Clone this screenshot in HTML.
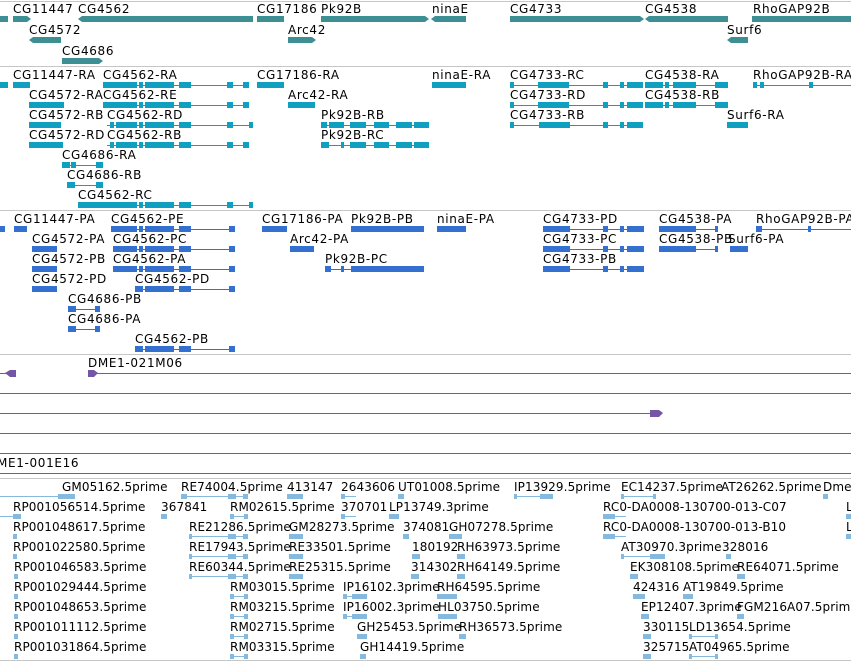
<!DOCTYPE html>
<html><head><meta charset="utf-8"><style>
html,body{margin:0;padding:0;background:#fff;width:851px;height:662px;overflow:hidden}
svg{display:block}
text{font-family:"DejaVu Sans","Liberation Sans",sans-serif;font-size:12px;fill:#000;letter-spacing:0.65px}
.e text{font-size:12px;letter-spacing:0.1px}
</style></head><body>
<svg width="851" height="662" viewBox="0 0 851 662" xmlns="http://www.w3.org/2000/svg">
<g fill="#c6c6c6">
<rect x="0" y="1" width="851" height="1"/><rect x="0" y="66" width="851" height="1"/>
<rect x="0" y="210" width="851" height="1"/><rect x="0" y="354" width="851" height="1"/>
<rect x="0" y="478" width="851" height="1"/><rect x="0" y="660" width="851" height="1"/>
</g>
<g fill="#3d8f94">
<rect x="0" y="16" width="8" height="6"/>
<polygon points="13,16 27,16 31,19 27,22 13,22"/>
<polygon points="82,16 253,16 253,22 82,22 78,19"/>
<rect x="257" y="16" width="27" height="6"/>
<polygon points="321,16 425,16 429,19 425,22 321,22"/>
<polygon points="435,16 466,16 466,22 435,22 431,19"/>
<polygon points="510,16 640,16 644,19 640,22 510,22"/>
<polygon points="649,16 728,16 728,22 649,22 645,19"/>
<rect x="752" y="16" width="99" height="6"/>
<polygon points="29,40 33,37 61,37 61,43 33,43"/>
<polygon points="288,37 312,37 316,40 312,43 288,43"/>
<polygon points="731,37 748,37 748,43 731,43 727,40"/>
<polygon points="62,58 99,58 103,61 99,64 62,64"/>
</g>
<g>
<text x="13" y="13">CG11447</text><text x="78" y="13">CG4562</text><text x="257" y="13">CG17186</text>
<text x="321" y="13">Pk92B</text><text x="432" y="13">ninaE</text><text x="510" y="13">CG4733</text>
<text x="645" y="13">CG4538</text><text x="753" y="13">RhoGAP92B</text>
<text x="29" y="34">CG4572</text><text x="288" y="34">Arc42</text><text x="727" y="34">Surf6</text>
<text x="62" y="55">CG4686</text>
</g>
<g fill="#0e9fc1">
<rect x="0" y="82" width="8" height="6"/><rect x="13" y="82" width="17" height="6"/>
<rect x="103" y="82" width="34" height="6"/><rect x="139" y="82" width="4" height="6"/><rect x="145" y="82" width="29" height="6"/><rect x="103" y="85" width="146" height="1"/><rect x="179" y="82" width="12" height="6"/><rect x="227" y="82" width="6" height="6"/><rect x="243" y="82" width="6" height="6"/>
<rect x="257" y="82" width="27" height="6"/>
<rect x="432" y="82" width="34" height="6"/>
<rect x="510" y="85" width="133" height="1"/><rect x="510" y="82" width="4" height="6"/><rect x="538" y="82" width="26" height="6"/><rect x="564" y="82" width="5" height="6"/><rect x="603" y="82" width="5" height="6"/><rect x="620" y="82" width="4" height="6"/><rect x="627" y="82" width="16" height="6"/>
<rect x="645" y="82" width="18" height="6"/><rect x="665" y="82" width="4" height="6"/><rect x="673" y="82" width="23" height="6"/><rect x="645" y="85" width="83" height="1"/><rect x="715" y="82" width="13" height="6"/>
<rect x="753" y="85" width="98" height="1"/><rect x="753" y="82" width="4" height="6"/><rect x="760" y="82" width="4" height="6"/><rect x="809" y="82" width="4" height="6"/>
<rect x="29" y="102" width="35" height="6"/>
<rect x="103" y="102" width="34" height="6"/><rect x="139" y="102" width="4" height="6"/><rect x="145" y="102" width="29" height="6"/><rect x="103" y="105" width="146" height="1"/><rect x="179" y="102" width="12" height="6"/><rect x="227" y="102" width="6" height="6"/><rect x="243" y="102" width="6" height="6"/>
<rect x="288" y="102" width="27" height="6"/>
<rect x="510" y="105" width="133" height="1"/><rect x="510" y="102" width="4" height="6"/><rect x="538" y="102" width="26" height="6"/><rect x="564" y="102" width="5" height="6"/><rect x="603" y="102" width="5" height="6"/><rect x="620" y="102" width="4" height="6"/><rect x="627" y="102" width="16" height="6"/>
<rect x="645" y="102" width="18" height="6"/><rect x="665" y="102" width="4" height="6"/><rect x="673" y="102" width="23" height="6"/><rect x="645" y="105" width="83" height="1"/><rect x="715" y="102" width="13" height="6"/>
<rect x="29" y="122" width="32" height="6"/>
<rect x="107" y="125" width="146" height="1"/><rect x="110" y="122" width="4" height="6"/><rect x="116" y="122" width="21" height="6"/><rect x="139" y="122" width="4" height="6"/><rect x="145" y="122" width="29" height="6"/><rect x="179" y="122" width="12" height="6"/><rect x="227" y="122" width="6" height="6"/><rect x="249" y="122" width="4" height="6"/>
<rect x="321" y="125" width="108" height="1"/><rect x="321" y="122" width="6" height="6"/><rect x="329" y="122" width="15" height="6"/><rect x="350" y="122" width="16" height="6"/><rect x="374" y="122" width="15" height="6"/><rect x="396" y="122" width="16" height="6"/><rect x="414" y="122" width="15" height="6"/>
<rect x="510" y="125" width="133" height="1"/><rect x="510" y="122" width="4" height="6"/><rect x="539" y="122" width="26" height="6"/><rect x="565" y="122" width="5" height="6"/><rect x="603" y="122" width="5" height="6"/><rect x="620" y="122" width="4" height="6"/><rect x="627" y="122" width="16" height="6"/>
<rect x="727" y="122" width="21" height="6"/>
<rect x="29" y="142" width="34" height="6"/>
<rect x="107" y="145" width="142" height="1"/><rect x="110" y="142" width="4" height="6"/><rect x="116" y="142" width="21" height="6"/><rect x="139" y="142" width="4" height="6"/><rect x="145" y="142" width="29" height="6"/><rect x="179" y="142" width="12" height="6"/><rect x="227" y="142" width="6" height="6"/><rect x="243" y="142" width="6" height="6"/>
<rect x="321" y="145" width="108" height="1"/><rect x="321" y="142" width="8" height="6"/><rect x="341" y="142" width="3" height="6"/><rect x="350" y="142" width="16" height="6"/><rect x="374" y="142" width="15" height="6"/><rect x="396" y="142" width="16" height="6"/><rect x="414" y="142" width="15" height="6"/>
<rect x="62" y="165" width="41" height="1"/><rect x="62" y="162" width="8" height="6"/><rect x="71" y="162" width="5" height="6"/><rect x="96" y="162" width="7" height="6"/>
<rect x="67" y="185" width="36" height="1"/><rect x="67" y="182" width="8" height="6"/><rect x="96" y="182" width="7" height="6"/>
<rect x="78" y="202" width="59" height="6"/><rect x="139" y="202" width="4" height="6"/><rect x="145" y="202" width="29" height="6"/><rect x="78" y="205" width="175" height="1"/><rect x="179" y="202" width="12" height="6"/><rect x="227" y="202" width="6" height="6"/><rect x="249" y="202" width="4" height="6"/>
</g>
<g>
<text x="13" y="79">CG11447-RA</text><text x="103" y="79">CG4562-RA</text><text x="257" y="79">CG17186-RA</text><text x="432" y="79">ninaE-RA</text><text x="510" y="79">CG4733-RC</text><text x="645" y="79">CG4538-RA</text><text x="753" y="79">RhoGAP92B-RA</text>
<text x="29" y="99">CG4572-RA</text><text x="103" y="99">CG4562-RE</text><text x="288" y="99">Arc42-RA</text><text x="510" y="99">CG4733-RD</text><text x="645" y="99">CG4538-RB</text>
<text x="29" y="119">CG4572-RB</text><text x="107" y="119">CG4562-RD</text><text x="321" y="119">Pk92B-RB</text><text x="510" y="119">CG4733-RB</text><text x="727" y="119">Surf6-RA</text>
<text x="29" y="139">CG4572-RD</text><text x="107" y="139">CG4562-RB</text><text x="321" y="139">Pk92B-RC</text>
<text x="62" y="159">CG4686-RA</text><text x="67" y="179">CG4686-RB</text><text x="78" y="199">CG4562-RC</text>
</g>
<g fill="#3370cf">
<rect x="0" y="226" width="5" height="6"/><rect x="14" y="226" width="13" height="6"/>
<rect x="111" y="226" width="26" height="6"/><rect x="139" y="226" width="4" height="6"/><rect x="145" y="226" width="29" height="6"/><rect x="111" y="229" width="124" height="1"/><rect x="179" y="226" width="12" height="6"/><rect x="229" y="226" width="6" height="6"/>
<rect x="262" y="226" width="25" height="6"/>
<rect x="351" y="226" width="73" height="6"/>
<rect x="437" y="226" width="29" height="6"/>
<rect x="543" y="226" width="27" height="6"/><rect x="543" y="229" width="101" height="1"/><rect x="603" y="226" width="5" height="6"/><rect x="620" y="226" width="4" height="6"/><rect x="627" y="226" width="17" height="6"/>
<rect x="659" y="226" width="37" height="6"/><rect x="659" y="229" width="59" height="1"/><rect x="715" y="226" width="3" height="6"/>
<rect x="756" y="229" width="95" height="1"/><rect x="756" y="226" width="6" height="6"/><rect x="808" y="226" width="3" height="6"/>
<rect x="32" y="246" width="25" height="6"/>
<rect x="113" y="246" width="24" height="6"/><rect x="139" y="246" width="4" height="6"/><rect x="145" y="246" width="29" height="6"/><rect x="113" y="249" width="122" height="1"/><rect x="179" y="246" width="12" height="6"/><rect x="229" y="246" width="6" height="6"/>
<rect x="290" y="246" width="24" height="6"/>
<rect x="543" y="246" width="27" height="6"/><rect x="543" y="249" width="101" height="1"/><rect x="603" y="246" width="5" height="6"/><rect x="620" y="246" width="4" height="6"/><rect x="627" y="246" width="17" height="6"/>
<rect x="659" y="246" width="37" height="6"/><rect x="659" y="249" width="59" height="1"/><rect x="715" y="246" width="3" height="6"/>
<rect x="730" y="246" width="18" height="6"/>
<rect x="32" y="266" width="25" height="6"/>
<rect x="113" y="266" width="24" height="6"/><rect x="139" y="266" width="4" height="6"/><rect x="145" y="266" width="29" height="6"/><rect x="113" y="269" width="122" height="1"/><rect x="179" y="266" width="12" height="6"/><rect x="229" y="266" width="6" height="6"/>
<rect x="325" y="269" width="98" height="1"/><rect x="325" y="266" width="6" height="6"/><rect x="341" y="266" width="3" height="6"/><rect x="351" y="266" width="73" height="6"/>
<rect x="543" y="266" width="27" height="6"/><rect x="543" y="269" width="101" height="1"/><rect x="603" y="266" width="5" height="6"/><rect x="620" y="266" width="4" height="6"/><rect x="627" y="266" width="17" height="6"/>
<rect x="32" y="286" width="25" height="6"/>
<rect x="135" y="286" width="8" height="6"/><rect x="145" y="286" width="29" height="6"/><rect x="135" y="289" width="100" height="1"/><rect x="179" y="286" width="12" height="6"/><rect x="229" y="286" width="6" height="6"/>
<rect x="68" y="309" width="32" height="1"/><rect x="68" y="306" width="8" height="6"/><rect x="95" y="306" width="5" height="6"/>
<rect x="68" y="329" width="32" height="1"/><rect x="68" y="326" width="8" height="6"/><rect x="95" y="326" width="5" height="6"/>
<rect x="135" y="346" width="8" height="6"/><rect x="145" y="346" width="29" height="6"/><rect x="135" y="349" width="100" height="1"/><rect x="179" y="346" width="12" height="6"/><rect x="229" y="346" width="6" height="6"/>
</g>
<g>
<text x="14" y="223">CG11447-PA</text><text x="111" y="223">CG4562-PE</text><text x="262" y="223">CG17186-PA</text><text x="351" y="223">Pk92B-PB</text><text x="437" y="223">ninaE-PA</text><text x="543" y="223">CG4733-PD</text><text x="659" y="223">CG4538-PA</text><text x="756" y="223">RhoGAP92B-PA</text>
<text x="32" y="243">CG4572-PA</text><text x="113" y="243">CG4562-PC</text><text x="290" y="243">Arc42-PA</text><text x="543" y="243">CG4733-PC</text><text x="659" y="243">CG4538-PB</text><text x="728" y="243">Surf6-PA</text>
<text x="32" y="263">CG4572-PB</text><text x="113" y="263">CG4562-PA</text><text x="325" y="263">Pk92B-PC</text><text x="543" y="263">CG4733-PB</text>
<text x="32" y="283">CG4572-PD</text><text x="135" y="283">CG4562-PD</text>
<text x="68" y="303">CG4686-PB</text><text x="68" y="323">CG4686-PA</text><text x="135" y="343">CG4562-PB</text>
</g>
<g fill="#7357a6">
<rect x="0" y="373" width="10" height="1"/><polygon points="5,373 10,370 16,370 16,377 10,377"/>
<polygon points="88,370 94,370 98,373 94,377 88,377"/><rect x="88" y="373" width="763" height="1"/>
<rect x="0" y="393" width="851" height="1"/>
<rect x="0" y="413" width="655" height="1"/><polygon points="650,410 659,410 663,413 659,417 650,417"/>
<rect x="0" y="433" width="851" height="1"/><rect x="0" y="453" width="851" height="1"/>
<rect x="0" y="473" width="851" height="1"/>
</g>
<text x="88" y="367">DME1-021M06</text>
<text x="-3" y="467">ME1-001E16</text>
<g fill="#85b9dd">
<rect x="0" y="496" width="72" height="1"/><rect x="58" y="494" width="17" height="5"/>
<rect x="181" y="496" width="67" height="1"/><rect x="181" y="494" width="6" height="5"/><rect x="228" y="494" width="8" height="5"/><rect x="243" y="494" width="5" height="5"/>
<rect x="287" y="494" width="16" height="5"/><rect x="341" y="496" width="15" height="1"/><rect x="341" y="494" width="4" height="5"/><rect x="398" y="494" width="6" height="5"/>
<rect x="514" y="496" width="39" height="1"/><rect x="514" y="494" width="3" height="5"/><rect x="540" y="494" width="13" height="5"/>
<rect x="621" y="496" width="35" height="1"/><rect x="621" y="494" width="3" height="5"/><rect x="653" y="494" width="3" height="5"/><rect x="823" y="494" width="5" height="5"/>
<rect x="0" y="516" width="20" height="1"/><rect x="13" y="514" width="8" height="5"/><rect x="161" y="514" width="6" height="5"/>
<rect x="230" y="516" width="18" height="1"/><rect x="230" y="514" width="4" height="5"/><rect x="244" y="514" width="4" height="5"/>
<rect x="341" y="516" width="15" height="1"/><rect x="341" y="514" width="4" height="5"/><rect x="389" y="514" width="10" height="5"/>
<rect x="603" y="516" width="23" height="1"/><rect x="603" y="514" width="12" height="5"/><rect x="846" y="514" width="5" height="5"/>
<rect x="13" y="534" width="4" height="5"/><rect x="189" y="536" width="59" height="1"/><rect x="189" y="534" width="3" height="5"/><rect x="228" y="534" width="8" height="5"/><rect x="243" y="534" width="5" height="5"/>
<rect x="289" y="534" width="14" height="5"/><rect x="403" y="534" width="6" height="5"/><rect x="449" y="534" width="13" height="5"/>
<rect x="603" y="536" width="23" height="1"/><rect x="603" y="534" width="12" height="5"/><rect x="846" y="534" width="5" height="5"/>
<rect x="13" y="554" width="4" height="5"/><rect x="189" y="556" width="59" height="1"/><rect x="189" y="554" width="3" height="5"/><rect x="228" y="554" width="8" height="5"/><rect x="243" y="554" width="5" height="5"/>
<rect x="289" y="554" width="14" height="5"/><rect x="412" y="554" width="8" height="5"/><rect x="457" y="554" width="8" height="5"/>
<rect x="621" y="556" width="44" height="1"/><rect x="621" y="554" width="3" height="5"/><rect x="650" y="554" width="15" height="5"/><rect x="726" y="554" width="5" height="5"/>
<rect x="14" y="574" width="4" height="5"/><rect x="189" y="576" width="59" height="1"/><rect x="189" y="574" width="3" height="5"/><rect x="228" y="574" width="8" height="5"/><rect x="243" y="574" width="5" height="5"/>
<rect x="289" y="574" width="14" height="5"/><rect x="411" y="574" width="8" height="5"/><rect x="457" y="574" width="8" height="5"/>
<rect x="630" y="574" width="8" height="5"/><rect x="737" y="574" width="8" height="5"/>
<rect x="14" y="594" width="4" height="5"/><rect x="230" y="596" width="18" height="1"/><rect x="230" y="594" width="4" height="5"/><rect x="244" y="594" width="4" height="5"/>
<rect x="343" y="596" width="24" height="1"/><rect x="343" y="594" width="4" height="5"/><rect x="352" y="594" width="15" height="5"/><rect x="437" y="594" width="20" height="5"/>
<rect x="633" y="594" width="12" height="5"/><rect x="683" y="594" width="10" height="5"/>
<rect x="14" y="614" width="4" height="5"/><rect x="230" y="616" width="18" height="1"/><rect x="230" y="614" width="4" height="5"/><rect x="244" y="614" width="4" height="5"/>
<rect x="343" y="616" width="24" height="1"/><rect x="343" y="614" width="4" height="5"/><rect x="352" y="614" width="15" height="5"/><rect x="438" y="614" width="19" height="5"/>
<rect x="641" y="614" width="8" height="5"/><rect x="737" y="614" width="7" height="5"/>
<rect x="14" y="634" width="4" height="5"/><rect x="230" y="636" width="18" height="1"/><rect x="230" y="634" width="4" height="5"/><rect x="244" y="634" width="4" height="5"/>
<rect x="357" y="634" width="10" height="5"/><rect x="459" y="634" width="7" height="5"/>
<rect x="643" y="634" width="8" height="5"/><rect x="689" y="636" width="29" height="1"/><rect x="689" y="634" width="3" height="5"/><rect x="715" y="634" width="3" height="5"/>
<rect x="14" y="654" width="4" height="5"/><rect x="230" y="656" width="18" height="1"/><rect x="230" y="654" width="4" height="5"/><rect x="244" y="654" width="4" height="5"/>
<rect x="360" y="654" width="6" height="5"/>
<rect x="643" y="654" width="8" height="5"/><rect x="689" y="656" width="29" height="1"/><rect x="689" y="654" width="3" height="5"/><rect x="715" y="654" width="3" height="5"/>
</g>
<g class="e">
<text x="62" y="491">GM05162.5prime</text><text x="181" y="491">RE74004.5prime</text><text x="287" y="491">413147</text><text x="341" y="491">2643606</text><text x="398" y="491">UT01008.5prime</text><text x="514" y="491">IP13929.5prime</text><text x="621" y="491">EC14237.5prime</text><text x="721" y="491">AT26262.5prime</text><text x="823" y="491">Dme</text>
<text x="13" y="511">RP001056514.5prime</text><text x="161" y="511">367841</text><text x="230" y="511">RM02615.5prime</text><text x="341" y="511">370701</text><text x="389" y="511">LP13749.3prime</text><text x="603" y="511">RC0-DA0008-130700-013-C07</text><text x="846" y="511">L</text>
<text x="13" y="531">RP001048617.5prime</text><text x="189" y="531">RE21286.5prime</text><text x="289" y="531">GM28273.5prime</text><text x="403" y="531">374081</text><text x="449" y="531">GH07278.5prime</text><text x="603" y="531">RC0-DA0008-130700-013-B10</text><text x="846" y="531">L</text>
<text x="13" y="551">RP001022580.5prime</text><text x="189" y="551">RE17943.5prime</text><text x="289" y="551">RE33501.5prime</text><text x="412" y="551">180192</text><text x="457" y="551">RH63973.5prime</text><text x="621" y="551">AT30970.3prime</text><text x="722" y="551">328016</text>
<text x="14" y="571">RP001046583.5prime</text><text x="189" y="571">RE60344.5prime</text><text x="289" y="571">RE25315.5prime</text><text x="411" y="571">314302</text><text x="457" y="571">RH64149.5prime</text><text x="630" y="571">EK308108.5prime</text><text x="737" y="571">RE64071.5prime</text>
<text x="14" y="591">RP001029444.5prime</text><text x="230" y="591">RM03015.5prime</text><text x="343" y="591">IP16102.3prime</text><text x="437" y="591">RH64595.5prime</text><text x="633" y="591">424316</text><text x="683" y="591">AT19849.5prime</text>
<text x="14" y="611">RP001048653.5prime</text><text x="230" y="611">RM03215.5prime</text><text x="343" y="611">IP16002.3prime</text><text x="438" y="611">HL03750.5prime</text><text x="641" y="611">EP12407.3prime</text><text x="737" y="611">FGM216A07.5prime</text>
<text x="14" y="631">RP001011112.5prime</text><text x="230" y="631">RM02715.5prime</text><text x="357" y="631">GH25453.5prime</text><text x="459" y="631">RH36573.5prime</text><text x="643" y="631">330115</text><text x="689" y="631">LD13654.5prime</text>
<text x="14" y="651">RP001031864.5prime</text><text x="230" y="651">RM03315.5prime</text><text x="360" y="651">GH14419.5prime</text><text x="643" y="651">325715</text><text x="689" y="651">AT04965.5prime</text>
</g>
</svg>
</body></html>
